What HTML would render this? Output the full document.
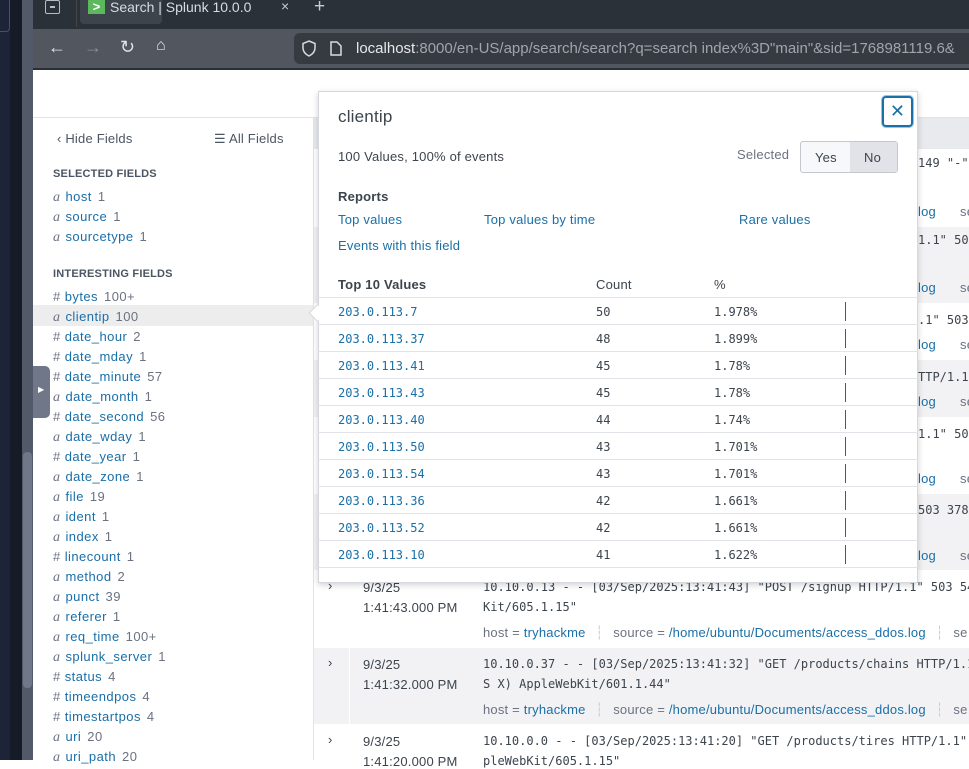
<!DOCTYPE html>
<html><head><meta charset="utf-8"><style>
*{margin:0;padding:0;box-sizing:border-box}
body{width:969px;height:760px;overflow:hidden;position:relative;background:#fff;font-family:"Liberation Sans",sans-serif;font-size:13px;color:#3c444d;letter-spacing:0.2px}
.a{position:absolute;white-space:nowrap}
.mono{font-family:"DejaVu Sans Mono","Liberation Mono",monospace;font-size:12px;letter-spacing:0}
.blue{color:#1a6fa7}
.f{position:absolute;left:53px;font-size:13px;color:#1a6fa7;letter-spacing:0.45px}
.f i{font-family:"Liberation Serif",serif;font-style:italic;color:#6b7280;font-size:14px;margin-right:5px}
.f b{font-weight:normal;color:#6b7280;margin-right:4px}
.f s{text-decoration:none;color:#6b7280;margin-left:6px}
.hd{position:absolute;left:53px;font-size:11px;font-weight:bold;color:#4b5563}
.row{position:absolute;left:318px;width:600px;height:27px;border-bottom:1px solid #e1e3e8}
.row span{position:absolute;top:7px}
</style></head><body>
<div class="a" style="left:0;top:0;width:10px;height:760px;background:#1d2437"></div>
<div class="a" style="left:0;top:0;width:10px;height:32px;border:1px solid #4a5060;border-left:none;border-top:none;border-radius:0 0 4px 0"></div>
<div class="a" style="left:10px;top:0;width:12px;height:760px;background:#161b28"></div>
<div class="a" style="left:22px;top:0;width:11px;height:760px;background:#525968"></div>
<div class="a" style="left:23px;top:452px;width:9px;height:236px;background:#6f7789;border-radius:4px"></div>
<div class="a" style="left:33px;top:0;width:936px;height:29px;background:#2b3138"></div>
<div class="a" style="left:45px;top:0;width:15px;height:14px;border:1.5px solid #b8bcc4;border-radius:2px"></div>
<div class="a" style="left:50px;top:6px;width:5px;height:1.5px;background:#b8bcc4"></div>
<div class="a" style="left:76px;top:0;width:1px;height:27px;background:#444"></div>
<div class="a" style="left:80px;top:0;width:82px;height:24px;background:#3e444c;border-radius:0 0 4px 4px"></div>
<div class="a" style="left:88px;top:0;width:17px;height:14px;background:#5cb85c;color:#fff;font-size:13px;font-weight:bold;text-align:center;line-height:14px">&gt;</div>
<div class="a" style="left:110px;top:-1px;color:#d8dbe0;font-size:14px;letter-spacing:0">Search | Splunk 10.0.0</div>
<div class="a" style="left:281px;top:-2px;color:#c8ccd2;font-size:14px">×</div>
<div class="a" style="left:314px;top:-4px;color:#c8ccd2;font-size:19px">+</div>
<div class="a" style="left:33px;top:29px;width:936px;height:40px;background:#52575f"></div>
<div class="a" style="left:33px;top:68px;width:936px;height:2px;background:#2a2e35"></div>
<div class="a" style="left:48px;top:37px;color:#e0e2e6;font-size:18px">←</div>
<div class="a" style="left:84px;top:37px;color:#8a8f97;font-size:18px">→</div>
<div class="a" style="left:120px;top:37px;color:#e0e2e6;font-size:18px">↻</div>
<div class="a" style="left:156px;top:37px;color:#e0e2e6;font-size:16px">⌂</div>
<div class="a" style="left:294px;top:33px;width:680px;height:31px;background:#363a41;border-radius:6px"></div>
<svg class="a" style="left:302px;top:40px" width="14" height="17"><path d="M7 1 L13 3.5 V8 C13 12 10 14.5 7 16 C4 14.5 1 12 1 8 V3.5 Z" fill="none" stroke="#d8dbe0" stroke-width="1.5"/></svg>
<svg class="a" style="left:330px;top:41px" width="12" height="15"><path d="M1 1 H7 L11 5 V14 H1 Z" fill="none" stroke="#d8dbe0" stroke-width="1.5"/></svg>
<div class="a" style="left:356px;top:40px;font-size:15px;color:#e6e8eb;letter-spacing:0">localhost<span style="color:#a0a5ad">:8000/en-US/app/search/search?q=search index%3D"main"&amp;sid=1768981119.6&amp;</span></div>
<div class="a" style="left:33px;top:117px;width:936px;height:1px;background:#e1e3e8"></div>
<div class="a" style="left:313px;top:117px;width:1px;height:643px;background:#e1e3e8"></div>
<div class="a" style="left:314px;top:118px;width:655px;height:31px;background:#e9eaee"></div>
<div class="a" style="left:57px;top:131px;color:#4b5563">‹ Hide Fields</div>
<div class="a" style="left:214px;top:131px;color:#4b5563">☰ All Fields</div>
<div class="hd" style="top:168px">SELECTED FIELDS</div>
<div class="f" style="top:189px"><i>a</i>host<s>1</s></div>
<div class="f" style="top:209px"><i>a</i>source<s>1</s></div>
<div class="f" style="top:229px"><i>a</i>sourcetype<s>1</s></div>
<div class="hd" style="top:268px">INTERESTING FIELDS</div>
<div class="a" style="left:33px;top:305px;width:280px;height:21px;background:#ededed"></div>
<div class="f" style="top:289px"><b>#</b>bytes<s>100+</s></div>
<div class="f" style="top:309px"><i>a</i>clientip<s>100</s></div>
<div class="f" style="top:329px"><b>#</b>date_hour<s>2</s></div>
<div class="f" style="top:349px"><b>#</b>date_mday<s>1</s></div>
<div class="f" style="top:369px"><b>#</b>date_minute<s>57</s></div>
<div class="f" style="top:389px"><i>a</i>date_month<s>1</s></div>
<div class="f" style="top:409px"><b>#</b>date_second<s>56</s></div>
<div class="f" style="top:429px"><i>a</i>date_wday<s>1</s></div>
<div class="f" style="top:449px"><b>#</b>date_year<s>1</s></div>
<div class="f" style="top:469px"><i>a</i>date_zone<s>1</s></div>
<div class="f" style="top:489px"><i>a</i>file<s>19</s></div>
<div class="f" style="top:509px"><i>a</i>ident<s>1</s></div>
<div class="f" style="top:529px"><i>a</i>index<s>1</s></div>
<div class="f" style="top:549px"><b>#</b>linecount<s>1</s></div>
<div class="f" style="top:569px"><i>a</i>method<s>2</s></div>
<div class="f" style="top:589px"><i>a</i>punct<s>39</s></div>
<div class="f" style="top:609px"><i>a</i>referer<s>1</s></div>
<div class="f" style="top:629px"><i>a</i>req_time<s>100+</s></div>
<div class="f" style="top:649px"><i>a</i>splunk_server<s>1</s></div>
<div class="f" style="top:669px"><b>#</b>status<s>4</s></div>
<div class="f" style="top:689px"><b>#</b>timeendpos<s>4</s></div>
<div class="f" style="top:709px"><b>#</b>timestartpos<s>4</s></div>
<div class="f" style="top:729px"><i>a</i>uri<s>20</s></div>
<div class="f" style="top:749px"><i>a</i>uri_path<s>20</s></div>
<div class="a" style="left:33px;top:366px;width:17px;height:52px;background:#6f7789;border-radius:0 5px 5px 0"></div>
<div class="a" style="left:38px;top:385px;color:#fff;font-size:8px">▶</div>
<div class="a" style="left:314px;top:227px;width:655px;height:76px;background:#f2f2f4"></div>
<div class="a" style="left:314px;top:360px;width:655px;height:57px;background:#f2f2f4"></div>
<div class="a" style="left:314px;top:494px;width:655px;height:76px;background:#f2f2f4"></div>
<div class="a" style="left:314px;top:648px;width:655px;height:76px;background:#f2f2f4"></div>
<div class="a" style="left:349px;top:648px;width:1px;height:76px;background:#fff"></div>
<div class="a mono" style="left:918px;top:156px;color:#3c444d">149 "-"</div>
<div class="a mono" style="left:918px;top:233px">1.1" 503</div>
<div class="a mono" style="left:918px;top:313px">.1" 503</div>
<div class="a mono" style="left:918px;top:370px">TTP/1.1"</div>
<div class="a mono" style="left:918px;top:427px">1.1" 503</div>
<div class="a mono" style="left:918px;top:503px">503 378</div>
<div class="a blue" style="left:918px;top:204px">log</div><div class="a" style="left:960px;top:204px;color:#6b7280">se</div>
<div class="a blue" style="left:918px;top:280px">log</div><div class="a" style="left:960px;top:280px;color:#6b7280">se</div>
<div class="a blue" style="left:918px;top:337px">log</div><div class="a" style="left:960px;top:337px;color:#6b7280">se</div>
<div class="a blue" style="left:918px;top:394px">log</div><div class="a" style="left:960px;top:394px;color:#6b7280">se</div>
<div class="a blue" style="left:918px;top:471px">log</div><div class="a" style="left:960px;top:471px;color:#6b7280">se</div>
<div class="a blue" style="left:918px;top:548px">log</div><div class="a" style="left:960px;top:548px;color:#6b7280">se</div>

<div class="a" style="left:328px;top:578px;color:#3c444d">›</div>
<div class="a" style="left:363px;top:580px">9/3/25</div>
<div class="a" style="left:363px;top:600px">1:41:43.000 PM</div>
<div class="a mono" style="left:483px;top:580px">10.10.0.13 - - [03/Sep/2025:13:41:43] "POST /signup HTTP/1.1" 503 548</div>
<div class="a mono" style="left:483px;top:600px">Kit/605.1.15"</div>
<div class="a" style="left:483px;top:625px;color:#6b7280">host = <span class="blue">tryhackme</span> <span style="color:#ccc;margin:0 6px">┆</span> source = <span class="blue">/home/ubuntu/Documents/access_ddos.log</span> <span style="color:#ccc;margin:0 6px">┆</span> se</div>

<div class="a" style="left:328px;top:655px">›</div>
<div class="a" style="left:363px;top:657px">9/3/25</div>
<div class="a" style="left:363px;top:677px">1:41:32.000 PM</div>
<div class="a mono" style="left:483px;top:657px">10.10.0.37 - - [03/Sep/2025:13:41:32] "GET /products/chains HTTP/1.1"</div>
<div class="a mono" style="left:483px;top:677px">S X) AppleWebKit/601.1.44"</div>
<div class="a" style="left:483px;top:702px;color:#6b7280">host = <span class="blue">tryhackme</span> <span style="color:#ccc;margin:0 6px">┆</span> source = <span class="blue">/home/ubuntu/Documents/access_ddos.log</span> <span style="color:#ccc;margin:0 6px">┆</span> se</div>

<div class="a" style="left:328px;top:732px">›</div>
<div class="a" style="left:363px;top:734px">9/3/25</div>
<div class="a" style="left:363px;top:754px">1:41:20.000 PM</div>
<div class="a mono" style="left:483px;top:734px">10.10.0.0 - - [03/Sep/2025:13:41:20] "GET /products/tires HTTP/1.1" 50</div>
<div class="a mono" style="left:483px;top:754px">pleWebKit/605.1.15"</div>

<div class="a" style="left:318px;top:91px;width:600px;height:492px;background:#fff;border:1px solid #d5d8de;box-shadow:0 2px 6px rgba(0,0,0,.18)"></div>
<div class="a" style="left:311px;top:307px;width:12px;height:12px;background:#fff;transform:rotate(45deg);border-left:1px solid #d5d8de;border-bottom:1px solid #d5d8de"></div>
<div class="a" style="left:338px;top:107px;font-size:17px;color:#3c444d">clientip</div>
<div class="a" style="left:882px;top:96px;width:31px;height:31px;border:2px solid #1a6fa7;border-radius:4px;box-shadow:0 0 0 1px #9cc3e0;color:#1a6fa7;font-size:18px;text-align:center;line-height:26px">✕</div>
<div class="a" style="left:338px;top:149px">100 Values, 100% of events</div>
<div class="a" style="left:737px;top:147px;color:#6b7280">Selected</div>
<div class="a" style="left:800px;top:141px;width:98px;height:32px;border:1px solid #c3c7ce;border-radius:3px;background:#f7f8fa"></div>
<div class="a" style="left:850px;top:142px;width:47px;height:30px;background:#e1e3e8"></div>
<div class="a" style="left:815px;top:150px">Yes</div>
<div class="a" style="left:864px;top:150px">No</div>
<div class="a" style="left:338px;top:189px;font-weight:bold">Reports</div>
<div class="a blue" style="left:338px;top:212px">Top values</div>
<div class="a blue" style="left:484px;top:212px">Top values by time</div>
<div class="a blue" style="left:739px;top:212px">Rare values</div>
<div class="a blue" style="left:338px;top:238px">Events with this field</div>
<div class="a" style="left:338px;top:277px;font-weight:bold">Top 10 Values</div>
<div class="a" style="left:596px;top:277px">Count</div>
<div class="a" style="left:714px;top:277px">%</div>
<div class="a" style="left:318px;top:297px;width:600px;height:1px;background:#e1e3e8"></div>
<div class="row" style="top:298px"><span class="mono blue" style="left:20px">203.0.113.7</span><span class="mono" style="left:278px">50</span><span class="mono" style="left:396px">1.978%</span><span style="left:527px;top:4px;width:1px;height:19px;background:#555"></span></div>
<div class="row" style="top:325px"><span class="mono blue" style="left:20px">203.0.113.37</span><span class="mono" style="left:278px">48</span><span class="mono" style="left:396px">1.899%</span><span style="left:527px;top:4px;width:1px;height:19px;background:#555"></span></div>
<div class="row" style="top:352px"><span class="mono blue" style="left:20px">203.0.113.41</span><span class="mono" style="left:278px">45</span><span class="mono" style="left:396px">1.78%</span><span style="left:527px;top:4px;width:1px;height:19px;background:#555"></span></div>
<div class="row" style="top:379px"><span class="mono blue" style="left:20px">203.0.113.43</span><span class="mono" style="left:278px">45</span><span class="mono" style="left:396px">1.78%</span><span style="left:527px;top:4px;width:1px;height:19px;background:#555"></span></div>
<div class="row" style="top:406px"><span class="mono blue" style="left:20px">203.0.113.40</span><span class="mono" style="left:278px">44</span><span class="mono" style="left:396px">1.74%</span><span style="left:527px;top:4px;width:1px;height:19px;background:#555"></span></div>
<div class="row" style="top:433px"><span class="mono blue" style="left:20px">203.0.113.50</span><span class="mono" style="left:278px">43</span><span class="mono" style="left:396px">1.701%</span><span style="left:527px;top:4px;width:1px;height:19px;background:#555"></span></div>
<div class="row" style="top:460px"><span class="mono blue" style="left:20px">203.0.113.54</span><span class="mono" style="left:278px">43</span><span class="mono" style="left:396px">1.701%</span><span style="left:527px;top:4px;width:1px;height:19px;background:#555"></span></div>
<div class="row" style="top:487px"><span class="mono blue" style="left:20px">203.0.113.36</span><span class="mono" style="left:278px">42</span><span class="mono" style="left:396px">1.661%</span><span style="left:527px;top:4px;width:1px;height:19px;background:#555"></span></div>
<div class="row" style="top:514px"><span class="mono blue" style="left:20px">203.0.113.52</span><span class="mono" style="left:278px">42</span><span class="mono" style="left:396px">1.661%</span><span style="left:527px;top:4px;width:1px;height:19px;background:#555"></span></div>
<div class="row" style="top:541px"><span class="mono blue" style="left:20px">203.0.113.10</span><span class="mono" style="left:278px">41</span><span class="mono" style="left:396px">1.622%</span><span style="left:527px;top:4px;width:1px;height:19px;background:#555"></span></div>
</body></html>
